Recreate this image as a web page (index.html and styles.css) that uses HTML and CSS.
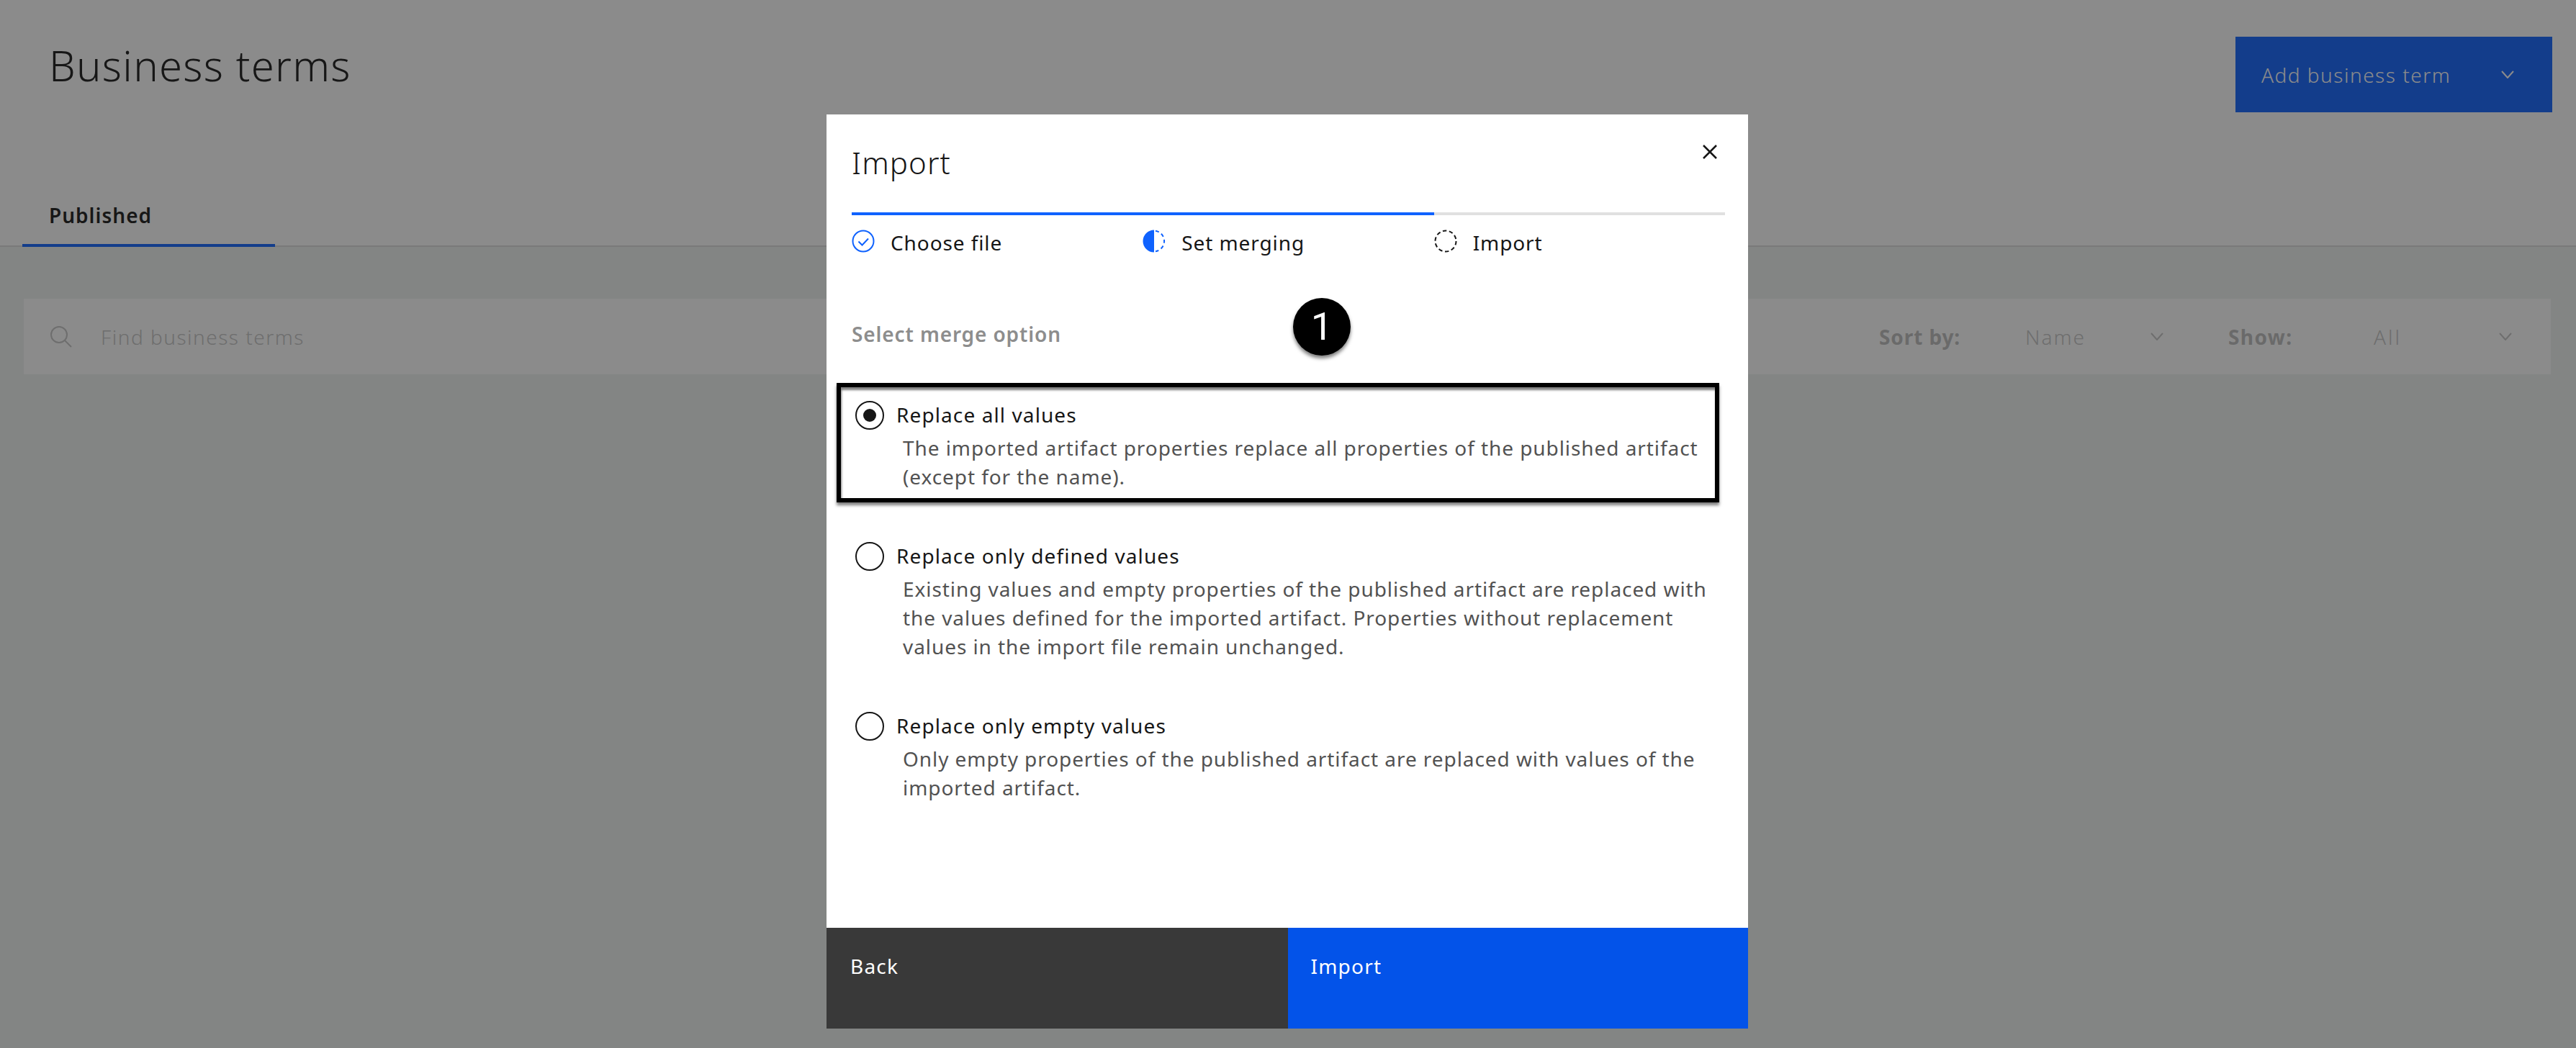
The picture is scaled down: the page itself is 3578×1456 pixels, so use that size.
FILE: index.html
```html
<!DOCTYPE html>
<html lang="en">
<head>
<meta charset="utf-8">
<title>Business terms</title>
<link rel="stylesheet" href="styles.css">
</head>
<body>
<div class="page">
  <header class="head">
    <div class="head-row">
      <h1 class="page-title">Business terms</h1>
      <button class="add-btn"><span class="add-label">Add business term</span>
        <svg class="chev" viewBox="0 0 18 11"><path d="M1 1l8 9 8-9"/></svg></button>
    </div>
    <div class="tab"><span class="tab-label">Published</span></div>
  </header>
  <main class="content">
    <div class="toolbar">
      <svg class="search" viewBox="0 0 30 30"><circle cx="12" cy="12" r="11"/><path d="M20 20l9 9"/></svg>
      <span class="placeholder">Find business terms</span>
      <div class="filters">
        <span class="flabel flabel-sort">Sort by:</span>
        <span class="fvalue fvalue-name">Name</span>
        <svg class="fchev" viewBox="0 0 18 11"><path d="M1 1l8 9 8-9"/></svg>
        <span class="flabel flabel-show">Show:</span>
        <span class="fvalue fvalue-all">All</span>
        <svg class="fchev" viewBox="0 0 18 11"><path d="M1 1l8 9 8-9"/></svg>
      </div>
    </div>
  </main>
</div>

<div class="overlay">
  <section class="modal">
    <div class="modal-body">
      <div class="modal-head">
        <h2 class="modal-title">Import</h2>
        <svg class="close" viewBox="0 0 22 22"><path d="M2 2l18 18M20 2L2 20"/></svg>
      </div>
      <div class="steps">
        <div class="step done">
          <svg class="step-icon" viewBox="0 0 32 32"><circle class="blue-line" cx="16" cy="16" r="14.5"/><path class="blue-line" d="M9.5 16.500l5 5 8.500-9"/></svg>
          <span class="step-label">Choose file</span>
        </div>
        <div class="step done">
          <svg class="step-icon" viewBox="0 0 32 32"><path class="blue-fill" d="M16 .5a15.500 15.500 0 0 0 0 31z"/><path class="blue-dash" d="M18 1.700a14.500 14.500 0 0 1 0 28.600"/></svg>
          <span class="step-label">Set merging</span>
        </div>
        <div class="step">
          <svg class="step-icon" viewBox="0 0 32 32"><circle class="dark-dash" cx="16" cy="16" r="14.500"/></svg>
          <span class="step-label">Import</span>
        </div>
      </div>
      <h3 class="merge-title">Select merge option</h3>
      <div class="options">
        <div class="option">
          <div class="option-row"><span class="radio checked"></span><span class="option-label">Replace all values</span></div>
          <p class="option-desc">The imported artifact properties replace all properties of the published artifact (except for the name).</p>
        </div>
        <div class="option">
          <div class="option-row"><span class="radio"></span><span class="option-label">Replace only defined values</span></div>
          <p class="option-desc">Existing values and empty properties of the published artifact are replaced with the values defined for the imported artifact. Properties without replacement values in the import file remain unchanged.</p>
        </div>
        <div class="option">
          <div class="option-row"><span class="radio"></span><span class="option-label">Replace only empty values</span></div>
          <p class="option-desc">Only empty properties of the published artifact are replaced with values of the imported artifact.</p>
        </div>
      </div>
    </div>
    <footer class="modal-foot">
      <button class="foot-btn back">Back</button>
      <button class="foot-btn primary">Import</button>
    </footer>
    <div class="callout-box"></div>
    <div class="callout-badge">1</div>
  </section>
</div>
</body>
</html>
```

FILE: styles.css
```css
* { box-sizing: border-box; }
html, body { margin: 0; height: 100%; overflow: hidden; }
body { font-family: "Noto Sans", "Liberation Sans", sans-serif; color: #161616; font-size: 28px; }
h1, h2, h3, p { margin: 0; font-weight: 400; }
button { font-family: inherit; border: 0; padding: 0; }

.page { height: 100vh; display: flex; flex-direction: column; background: #eff3f1; }
.head { height: 343px; background: #fff; border-bottom: 2px solid #dcdcdc; display: flex; flex-direction: column; justify-content: space-between; }
.head-row { display: flex; justify-content: space-between; align-items: flex-start; padding: 51px 33px 0 68px; }
.page-title { font-size: 58px; font-weight: 300; line-height: 76px; letter-spacing: 1.3px; margin-top: 2px; }
.add-btn { width: 440px; height: 105px; background: #0f62fe; color: #fff; font-size: 28px; display: flex; align-items: center; justify-content: space-between; padding: 0 53px 0 36px; font-weight: 300; letter-spacing: 1.5px; }
.chev { width: 18px; height: 11px; fill: none; stroke: #fff; stroke-width: 2; }
.tab { width: 351px; height: 64px; margin-left: 31px; margin-bottom: -2px; border-bottom: 4px solid #0f62fe; padding-left: 37px; }
.tab-label { font-weight: 600; font-size: 28px; line-height: 40px; display: inline-block; letter-spacing: 1px; }

.content { padding: 72px 35px 0 33px; }
.toolbar { height: 105px; background: #fff; display: flex; align-items: center; padding: 0 54px 0 37px; }
.search { width: 30px; height: 30px; fill: none; stroke: #c4c4c4; stroke-width: 2; margin-right: 40px; }
.placeholder { color: #c4c4c4; font-size: 28px; font-weight: 300; letter-spacing: 1.5px; }
.filters { margin-left: auto; display: flex; align-items: center; }
.flabel { font-weight: 700; color: #bcbcbc; display: block; }
.flabel-sort { width: 203px; letter-spacing: .9px; }
.flabel-show { width: 202px; margin-left: 90px; letter-spacing: 1.4px; }
.fvalue { display: block; width: 174px; color: #c4c4c4; font-weight: 300; }
.fvalue-name { letter-spacing: 2px; }
.fvalue-all { letter-spacing: 3px; }
.fchev { width: 18px; height: 11px; fill: none; stroke: #c4c4c4; stroke-width: 2; }

.overlay { position: fixed; inset: 0; background: rgba(23, 23, 23, .5); padding: 159px 2px 0 0; display: flex; justify-content: center; align-items: flex-start; }
.modal { position: relative; width: 1280px; height: 1270px; background: #fff; display: flex; flex-direction: column; }
.modal-body { flex: 1; padding: 0 32px 0 35px; }
.modal-head { height: 136px; display: flex; justify-content: space-between; align-items: flex-start; }
.modal-title { font-size: 42px; font-weight: 300; line-height: 56px; margin-top: 39px; letter-spacing: 1.1px; }
.close { width: 22px; height: 22px; margin: 41px 10px 0 0; fill: none; stroke: #161616; stroke-width: 2.500; }

.steps { display: grid; grid-template-columns: repeat(3, 1fr); }
.step { height: 76px; border-top: 4px solid #e0e0e0; display: flex; align-items: flex-start; padding-top: 20px; }
.step.done { border-top-color: #0f62fe; }
.step-icon { width: 32px; height: 32px; margin-right: 22px; flex: none; }
.step-label { line-height: 36px; font-size: 28px; letter-spacing: .9px; }
.blue-line { fill: none; stroke: #0f62fe; stroke-width: 2; }
.blue-fill { fill: #0f62fe; }
.blue-dash { fill: none; stroke: #0f62fe; stroke-width: 2; stroke-dasharray: 5 4; }
.dark-dash { fill: none; stroke: #161616; stroke-width: 2; stroke-dasharray: 5.500 3.600; }

.merge-title { margin-top: 73px; color: #8d8d8d; font-weight: 600; font-size: 28px; line-height: 40px; letter-spacing: .87px; }
.options { margin-top: 73px; display: flex; flex-direction: column; gap: 70px; }
.option { padding-left: 5px; }
.option-row { display: flex; align-items: center; height: 40px; gap: 17px; }
.option-label { letter-spacing: 1.1px; margin-bottom: 3px; }
.radio { width: 40px; height: 40px; border-radius: 50%; border: 2px solid #161616; display: flex; align-items: center; justify-content: center; flex: none; }
.radio.checked::after { content: ""; width: 18px; height: 18px; background: #161616; border-radius: 50%; }
.option-desc { width: 1135px; margin: 5px 0 1px 66px; line-height: 40px; color: #525252; font-size: 28px; letter-spacing: .93px; }

.modal-foot { height: 140px; display: flex; }
.foot-btn { flex: 1; color: #fff; font-size: 28px; text-align: left; padding: 33px 0 67px 33px; line-height: 40px; height: 140px; letter-spacing: 1.2px; }
.back { background: #393939; }
.primary { background: #0353e9; padding-left: 32px; }

.callout-box { position: absolute; left: 14px; top: 373px; width: 1226px; height: 166px; border: 6px solid #000; box-shadow: 0 4px 4px rgba(0, 0, 0, .5), inset 1px 4px 3px rgba(0, 0, 0, .5); }
.callout-badge { position: absolute; left: 648px; top: 255px; width: 80px; height: 80px; border-radius: 50%; background: #000; color: #fff; font-family: Roboto, "Liberation Sans", sans-serif; font-size: 54px; line-height: 80px; text-align: center; box-shadow: 0 4px 5px rgba(0, 0, 0, .5); }
```
